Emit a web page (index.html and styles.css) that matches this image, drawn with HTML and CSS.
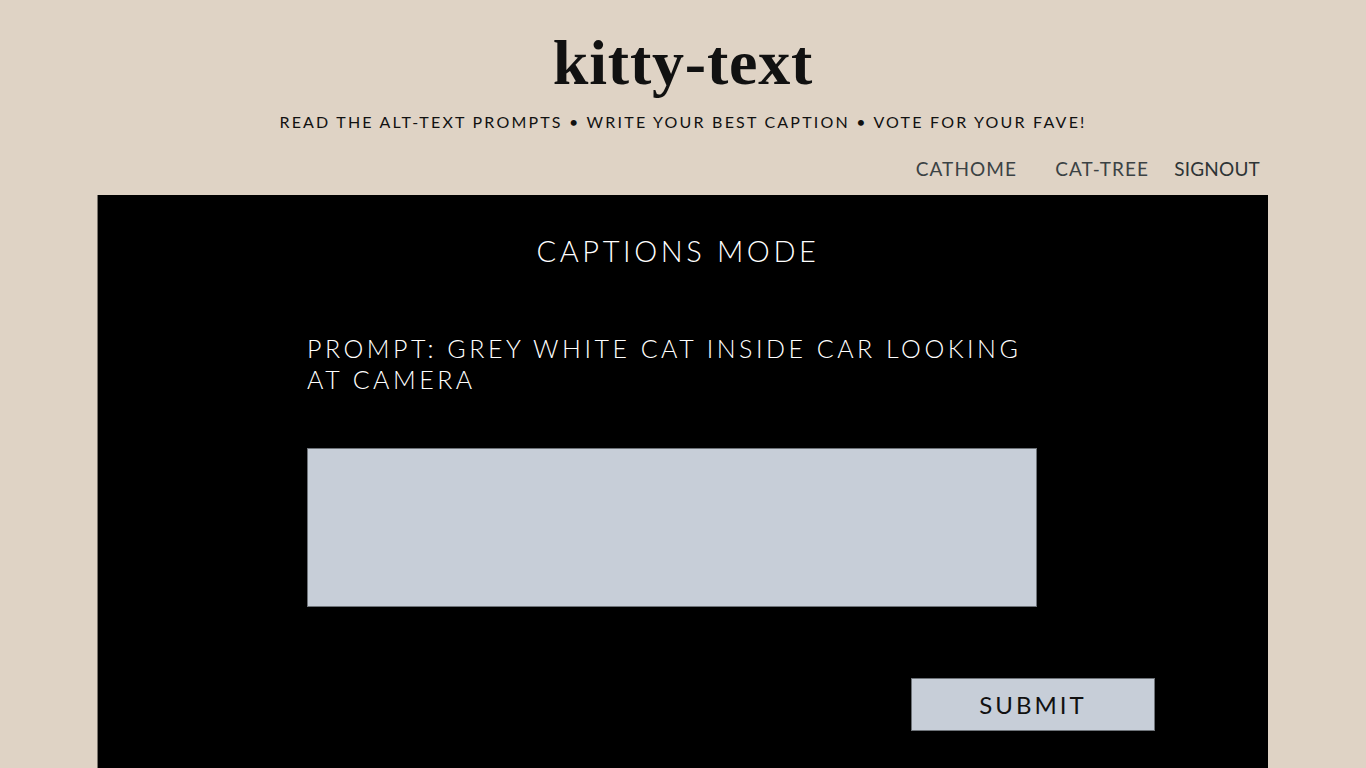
FILE: index.html
```html
<!DOCTYPE html>
<html lang="en">
<head>
<meta charset="utf-8">
<title>kitty-text</title>
<link rel="stylesheet" href="styles.css">
</head>
<body>
<header class="header">
  <h1 class="logo">kitty-text</h1>
  <p class="tagline">READ THE ALT-TEXT PROMPTS • WRITE YOUR BEST CAPTION • VOTE FOR YOUR FAVE!</p>
  <nav class="nav">
    <a class="nav-link" href="#">CATHOME</a>
    <a class="nav-link nav-tree" href="#">CAT-TREE</a>
    <a class="nav-link nav-sign" href="#">SIGNOUT</a>
  </nav>
</header>
<main class="panel">
  <h2 class="mode">CAPTIONS MODE</h2>
  <div class="content">
    <p class="prompt">PROMPT: GREY WHITE CAT INSIDE CAR LOOKING AT CAMERA</p>
    <textarea class="caption"></textarea>
    <div class="actions">
      <button class="submit" type="button">SUBMIT</button>
    </div>
  </div>
</main>
</body>
</html>
```
FILE: styles.css
```css
html, body {
  margin: 0;
  padding: 0;
  background: #dfd3c5;
}
body {
  font-family: "Lato", "Open Sans", sans-serif;
  height: 768px;
  overflow: hidden;
}
.header {
  display: flex;
  flex-direction: column;
  align-items: center;
  padding-top: 28px;
}
.logo {
  margin: 0;
  font-family: "Liberation Serif", serif;
  font-weight: bold;
  font-size: 64px;
  line-height: 70px;
  letter-spacing: 0.8px;
  color: #111;
}
.tagline {
  margin: 14px 0 0;
  font-size: 16px;
  line-height: 20px;
  letter-spacing: 2.2px;
  color: #111;
}
.nav {
  align-self: stretch;
  display: flex;
  justify-content: flex-end;
  padding-right: 106px;
  margin-top: 25px;
  height: 38px;
  align-items: flex-start;
}
.nav-link {
  font-family: "Lato", sans-serif;
  font-size: 19px;
  line-height: 24px;
  letter-spacing: 1.1px;
  color: #3b4244;
  text-decoration: none;
}
.nav-tree {
  margin-left: 38px;
}
.nav-sign {
  margin-left: 25px;
  letter-spacing: 0.2px;
  color: #2e3436;
}
.panel {
  margin: 0 98px 0 97px;
  background: #000;
  border-left: 1px solid #7a746c;
  height: 573px;
  display: flex;
  flex-direction: column;
  align-items: center;
}
.mode {
  margin: 38px 10px 0 0;
  font-weight: 300;
  font-size: 29px;
  line-height: 36px;
  letter-spacing: 3.6px;
  color: #fff;
}
.content {
  align-self: stretch;
  padding: 0 0 0 209px;
  display: flex;
  flex-direction: column;
}
.prompt {
  margin: 64px 0 0;
  width: 730px;
  font-weight: 300;
  font-size: 25px;
  line-height: 31px;
  letter-spacing: 3.5px;
  color: #fff;
}
.caption {
  margin: 53px 0 0;
  width: 730px;
  height: 159px;
  box-sizing: border-box;
  background: #c7ced8;
  border: 1px solid #6e7379;
  resize: none;
  outline: none;
  padding: 4px;
  font-family: "Lato", sans-serif;
}
.actions {
  display: flex;
  padding-left: 604px;
  margin-top: 71px;
}
.submit {
  width: 244px;
  height: 53px;
  box-sizing: border-box;
  background: #c7ced8;
  border: 1px solid #6e7379;
  font-family: "Lato", sans-serif;
  font-size: 24px;
  letter-spacing: 3px;
  color: #111;
  padding: 0;
  cursor: pointer;
}
```
